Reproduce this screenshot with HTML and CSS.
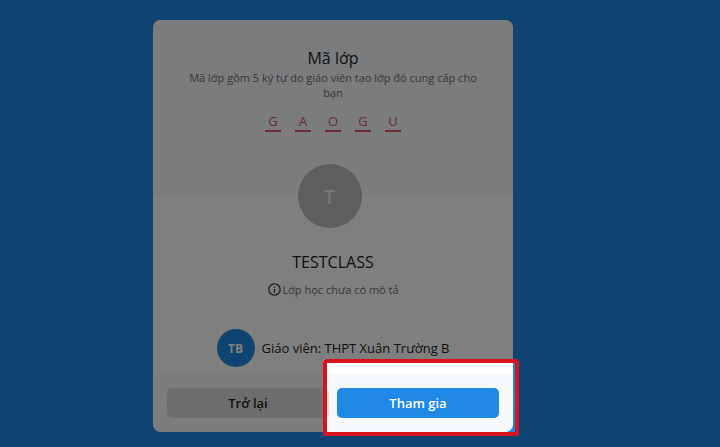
FILE: index.html
```html
<!DOCTYPE html>
<html lang="vi">
<head>
  <meta charset="UTF-8">
  <meta name="viewport" content="width=device-width, initial-scale=1.0">
  <title>Mã lớp</title>
  <link rel="stylesheet" href="styles.css">
</head>
<body>
  <main class="card">
    <header class="card-header">
      <h1>Mã lớp</h1>
      <p class="hint">Mã lớp gồm 5 ký tự do giáo viên tạo lớp đó cung cấp cho bạn</p>
      <div class="code">
        <input type="text" maxlength="1" value="G" aria-label="Ký tự 1">
        <input type="text" maxlength="1" value="A" aria-label="Ký tự 2">
        <input type="text" maxlength="1" value="O" aria-label="Ký tự 3">
        <input type="text" maxlength="1" value="G" aria-label="Ký tự 4">
        <input type="text" maxlength="1" value="U" aria-label="Ký tự 5">
      </div>
    </header>
    <section class="class-info">
      <div class="avatar class-avatar">T</div>
      <h2>TESTCLASS</h2>
      <p class="description">
        <svg class="info-icon" viewBox="0 0 24 24" aria-hidden="true">
          <path d="M11 7h2v2h-2zm0 4h2v6h-2zm1-9C6.48 2 2 6.48 2 12s4.480 10 10 10 10-4.480 10-10S17.520 2 12 2zm0 18c-4.410 0-8-3.590-8-8s3.590-8 8-8 8 3.590 8 8-3.590 8-8 8z"/>
        </svg>
        <span>Lớp học chưa có mô tả</span>
      </p>
      <div class="teacher">
        <div class="avatar teacher-avatar">TB</div>
        <span>Giáo viên: THPT Xuân Trường B</span>
      </div>
    </section>
    <footer class="actions">
      <button type="button" class="btn btn-back">Trở lại</button>
      <div class="join">
        <button type="button" class="btn btn-join">Tham gia</button>
        <div class="spotlight"></div>
      </div>
    </footer>
  </main>
</body>
</html>
```

FILE: styles.css
```css
* {
  margin: 0;
  padding: 0;
  box-sizing: border-box;
}

body {
  font-family: "Open Sans", sans-serif;
  background-color: #1e88e5;
  color: #222;
  display: flex;
  justify-content: center;
  align-items: flex-start;
  min-height: 100vh;
  padding: 20px 54px 14px 0;
  overflow: hidden;
}

.card {
  width: 100%;
  max-width: 360px;
  background-color: #fff;
  border-radius: 8px;
}

.card-header {
  padding: 26px 32px 63px;
  background-color: #f5f9fc;
  border-radius: 8px 8px 0 0;
  text-align: center;
}

h1,
h2 {
  font-size: 16px;
  font-weight: 400;
  line-height: 24px;
}

.hint,
.description {
  font-size: 11px;
  line-height: 15px;
  color: #707070;
}

.code {
  display: flex;
  justify-content: center;
  gap: 14px;
  margin-top: 12px;
}

.code input {
  width: 16px;
  height: 20px;
  border: none;
  border-bottom: 2px solid #e0525c;
  background: none;
  font-family: inherit;
  font-size: 13px;
  text-align: center;
  color: #e0525c;
}

.class-info {
  display: flex;
  flex-direction: column;
  align-items: center;
  padding-bottom: 7px;
}

.avatar {
  display: flex;
  align-items: center;
  justify-content: center;
  margin-right: 7px;
  border-radius: 50%;
  color: #fff;
}

.class-avatar {
  width: 64px;
  height: 64px;
  margin-top: -31px;
  margin-bottom: 22px;
  background-color: #bdbdbd;
  color: #eee;
  font-size: 20px;
  font-weight: 600;
}

.description {
  display: flex;
  align-items: center;
  margin-top: 8px;
}

.info-icon {
  width: 15px;
  height: 15px;
  fill: #333;
}

.teacher {
  display: flex;
  align-items: center;
  margin-top: 32px;
  font-size: 13px;
}

.teacher-avatar {
  width: 38px;
  height: 38px;
  background-color: #1e88e5;
  font-size: 12px;
  font-weight: 700;
}

.actions {
  display: flex;
  gap: 8px;
  padding: 14px;
  background-color: #f5f9fc;
  border-radius: 0 0 8px 8px;
}

.btn {
  flex: 1;
  width: 100%;
  height: 30px;
  border: none;
  border-radius: 5px;
  font-family: inherit;
  font-size: 13px;
  font-weight: 600;
  cursor: pointer;
}

.btn-back {
  background-color: #dcdcdc;
  color: #222;
}

.join {
  position: relative;
  flex: 1;
}

.btn-join {
  background-color: #1e88e5;
  color: #fff;
}

/* the shadow dims everything outside the frame */
.spotlight {
  position: absolute;
  inset: -29px -20px -18px -14px;
  border: 4px solid #d8131b;
  border-radius: 4px;
  box-shadow: 0 0 0 1000px rgba(0, 0, 0, 0.5);
  pointer-events: none;
}
```
